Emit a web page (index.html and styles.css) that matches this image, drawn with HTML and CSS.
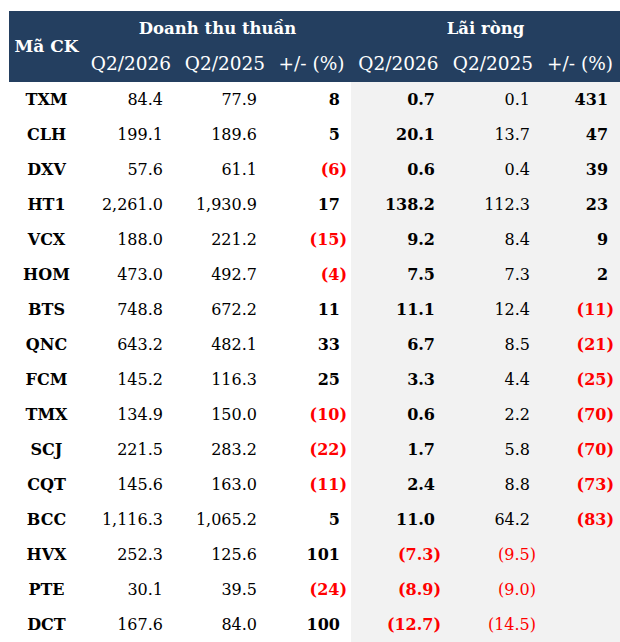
FILE: index.html
```html
<!DOCTYPE html>
<html lang="vi">
<head>
<meta charset="utf-8">
<title>Kết quả kinh doanh Q2</title>
<link rel="stylesheet" href="styles.css">
</head>
<body>
<table class="tbl">
  <colgroup>
    <col class="c1"><col class="c2"><col class="c3"><col class="c4"><col class="c5"><col class="c6"><col class="c7">
  </colgroup>
  <thead>
    <tr class="h1">
      <th rowspan="2" class="code-h">Mã CK</th>
      <th colspan="3" class="grp">Doanh thu thuần</th>
      <th colspan="3" class="grp">Lãi ròng</th>
    </tr>
    <tr class="h2">
      <th>Q2/2026</th><th>Q2/2025</th><th>+/- (%)</th>
      <th>Q2/2026</th><th>Q2/2025</th><th>+/- (%)</th>
    </tr>
  </thead>
  <tbody>
    <tr><td class="code">TXM</td><td class="v a">84.4</td><td class="v b">77.9</td><td class="v c bold">8</td><td class="v d bold g">0.7</td><td class="v e g">0.1</td><td class="v f bold g">431</td></tr>
    <tr><td class="code">CLH</td><td class="v a">199.1</td><td class="v b">189.6</td><td class="v c bold">5</td><td class="v d bold g">20.1</td><td class="v e g">13.7</td><td class="v f bold g">47</td></tr>
    <tr><td class="code">DXV</td><td class="v a">57.6</td><td class="v b">61.1</td><td class="v c bold neg">(6)</td><td class="v d bold g">0.6</td><td class="v e g">0.4</td><td class="v f bold g">39</td></tr>
    <tr><td class="code">HT1</td><td class="v a">2,261.0</td><td class="v b">1,930.9</td><td class="v c bold">17</td><td class="v d bold g">138.2</td><td class="v e g">112.3</td><td class="v f bold g">23</td></tr>
    <tr><td class="code">VCX</td><td class="v a">188.0</td><td class="v b">221.2</td><td class="v c bold neg">(15)</td><td class="v d bold g">9.2</td><td class="v e g">8.4</td><td class="v f bold g">9</td></tr>
    <tr><td class="code">HOM</td><td class="v a">473.0</td><td class="v b">492.7</td><td class="v c bold neg">(4)</td><td class="v d bold g">7.5</td><td class="v e g">7.3</td><td class="v f bold g">2</td></tr>
    <tr><td class="code">BTS</td><td class="v a">748.8</td><td class="v b">672.2</td><td class="v c bold">11</td><td class="v d bold g">11.1</td><td class="v e g">12.4</td><td class="v f bold g neg">(11)</td></tr>
    <tr><td class="code">QNC</td><td class="v a">643.2</td><td class="v b">482.1</td><td class="v c bold">33</td><td class="v d bold g">6.7</td><td class="v e g">8.5</td><td class="v f bold g neg">(21)</td></tr>
    <tr><td class="code">FCM</td><td class="v a">145.2</td><td class="v b">116.3</td><td class="v c bold">25</td><td class="v d bold g">3.3</td><td class="v e g">4.4</td><td class="v f bold g neg">(25)</td></tr>
    <tr><td class="code">TMX</td><td class="v a">134.9</td><td class="v b">150.0</td><td class="v c bold neg">(10)</td><td class="v d bold g">0.6</td><td class="v e g">2.2</td><td class="v f bold g neg">(70)</td></tr>
    <tr><td class="code">SCJ</td><td class="v a">221.5</td><td class="v b">283.2</td><td class="v c bold neg">(22)</td><td class="v d bold g">1.7</td><td class="v e g">5.8</td><td class="v f bold g neg">(70)</td></tr>
    <tr><td class="code">CQT</td><td class="v a">145.6</td><td class="v b">163.0</td><td class="v c bold neg">(11)</td><td class="v d bold g">2.4</td><td class="v e g">8.8</td><td class="v f bold g neg">(73)</td></tr>
    <tr><td class="code">BCC</td><td class="v a">1,116.3</td><td class="v b">1,065.2</td><td class="v c bold">5</td><td class="v d bold g">11.0</td><td class="v e g">64.2</td><td class="v f bold g neg">(83)</td></tr>
    <tr><td class="code">HVX</td><td class="v a">252.3</td><td class="v b">125.6</td><td class="v c bold">101</td><td class="v d bold g neg">(7.3)</td><td class="v e g neg">(9.5)</td><td class="v f bold g"></td></tr>
    <tr><td class="code">PTE</td><td class="v a">30.1</td><td class="v b">39.5</td><td class="v c bold neg">(24)</td><td class="v d bold g neg">(8.9)</td><td class="v e g neg">(9.0)</td><td class="v f bold g"></td></tr>
    <tr><td class="code">DCT</td><td class="v a">167.6</td><td class="v b">84.0</td><td class="v c bold">100</td><td class="v d bold g neg">(12.7)</td><td class="v e g neg">(14.5)</td><td class="v f bold g"></td></tr>
  </tbody>
</table>
</body>
</html>
```
FILE: styles.css
```css
html, body {
  margin: 0;
  padding: 0;
  background: #ffffff;
}
body {
  padding: 11px 0 0 9px;
  font-family: "DejaVu Serif", "Liberation Serif", serif;
  color: #000000;
}
.tbl {
  border-collapse: collapse;
  table-layout: fixed;
  width: 611px;
}
.c1 { width: 75px; }
.c2 { width: 94px; }
.c3 { width: 94px; }
.c4 { width: 79px; }
.c5 { width: 95px; }
.c6 { width: 94px; }
.c7 { width: 80px; }

thead th {
  background: #243f60;
  color: #ffffff;
  padding: 0;
  white-space: nowrap;
  line-height: 1.2;
}
.h1 th {
  height: 35px;
}
.h2 th {
  height: 36px;
  font-weight: normal;
  font-size: 18.5px;
  text-align: center;
  vertical-align: middle;
}
.code-h {
  font-size: 17px;
  font-weight: bold;
  text-align: center;
}
.grp {
  font-size: 16.5px;
  font-weight: bold;
  text-align: center;
  vertical-align: middle;
}
tbody td {
  height: 35px;
  padding: 0;
  font-size: 16px;
  line-height: 1.2;
  vertical-align: middle;
  white-space: nowrap;
}
.code {
  text-align: center;
  font-weight: bold;
  font-size: 16px;
}
.v { text-align: right; }
.bold { font-weight: bold; }
.g { background: #f2f2f2; }
.neg { color: #ff0000; }

.a { padding-right: 15px; }
.b { padding-right: 15px; }
.c { padding-right: 11px; }
.c.neg { padding-right: 4px; }
.d { padding-right: 11px; }
.d.neg { padding-right: 5px; }
.e { padding-right: 10px; }
.e.neg { padding-right: 4px; }
.f { padding-right: 12px; }
.f.neg { padding-right: 6px; }
```
